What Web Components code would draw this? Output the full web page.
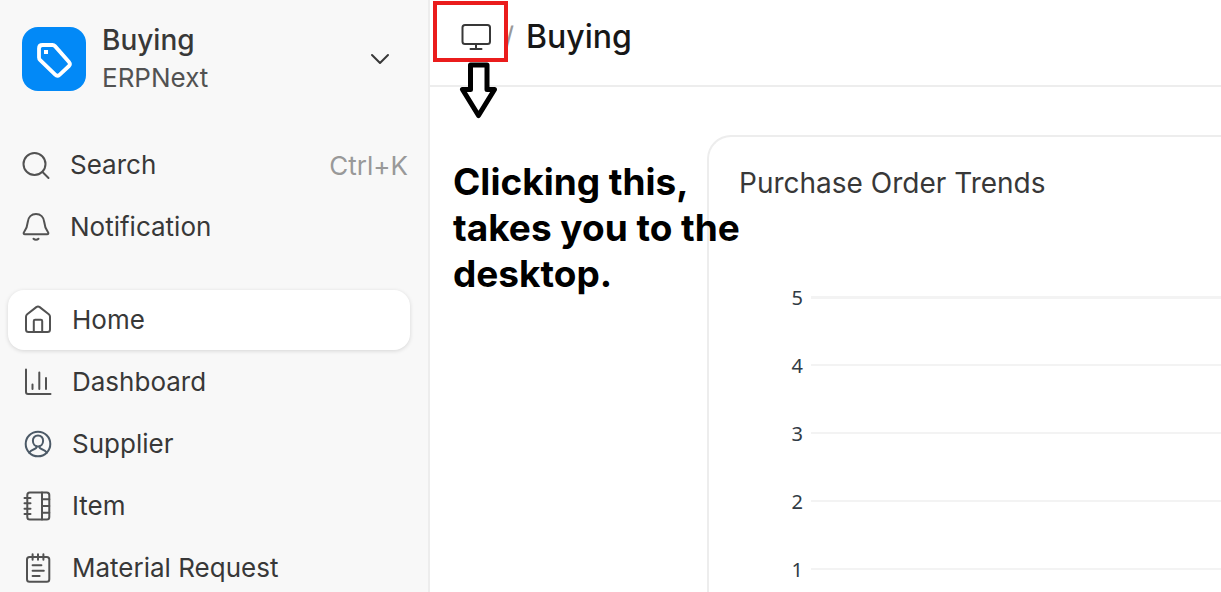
<!DOCTYPE html>
<html lang="en">
<head>
<meta charset="utf-8">
<title>Buying</title>
<style>
	body {
		background: #fff;
		color: #383838;
		font-family: Inter, "Liberation Sans", sans-serif;
		font-size: 26px;
		margin: 0;
	}
</style>
</head>
<body>
<app-shell>
	<app-sidebar slot="sidebar">
		<app-switcher slot="header" name="Buying" suite="ERPNext"></app-switcher>
		<nav-item slot="tools" icon="search" label="Search" shortcut="Ctrl+K"></nav-item>
		<nav-item slot="tools" icon="bell" label="Notification"></nav-item>
		<nav-item icon="home" label="Home" active></nav-item>
		<nav-item icon="chart" label="Dashboard"></nav-item>
		<nav-item icon="supplier" label="Supplier"></nav-item>
		<nav-item icon="item" label="Item"></nav-item>
		<nav-item icon="request" label="Material Request"></nav-item>
	</app-sidebar>
	<page-header>Buying</page-header>
	<chart-card heading="Purchase Order Trends" max="5"></chart-card>
	<help-note slot="note">Clicking this, takes you to the desktop.</help-note>
</app-shell>

<script>
const icons = {
	search: '<circle cx="14.5" cy="15" r="11"/><path d="M22.500 23l6 6"/>',
	bell: '<path d="M16 3c-4.600 0-7.700 3.300-8.200 7.800-.4 4.200-.8 6.200-3.700 10.200-.9 1.300-.5 2.300.9 2.300h22c1.400 0 1.800-1 .9-2.300-2.900-4-3.300-6-3.700-10.200C23.700 6.300 20.600 3 16 3zM13.500 27.800c1.300 1.400 3.700 1.400 5 0"/>',
	home: '<path d="M14.300 3.100 5.200 10.200Q4 11.200 4 12.700V25.500Q4 28 6.500 28h19q2.500 0 2.500-2.500V12.700q0-1.500-1.200-2.500L17.700 3.100q-1.700-1.300-3.400 0zM11.800 28V17q0-1.300 1.300-1.300h5.800q1.300 0 1.300 1.300v11"/>',
	chart: '<path d="M4 3.500V26q0 2 2 2h22.500M10.500 18.500V23M17.300 6.500V23M24 12v11"/>',
	supplier: '<circle cx="16" cy="16" r="12.3"/><path d="M16 7.600c-3.200 0-5.100 2.100-5.100 5.100 0 3.300 2.200 5.700 5.100 5.700s5.100-2.400 5.100-5.700c0-3-1.900-5.100-5.100-5.100zM14.500 18.300c.2 1.500-.5 2.100-2 2.700-2.200.9-4.200 1.800-5.300 3.600M17.500 18.300c-.2 1.500.5 2.100 2 2.700 2.200.9 4.200 1.800 5.300 3.600"/>',
	item: '<rect x="5.300" y="2.600" width="22" height="27" rx="2.500"/><path d="M20 2.600v27M20 9.300h7.300M20 16h7.300M20 22.700h7.300M2.500 8h6M2.500 13.300h6M2.500 18.700h6M2.500 24h6"/>',
	request: '<rect x="5" y="5" width="22.300" height="24.800" rx="2.500"/><path d="M10.600 2.300v5.500M16 2.300v5.500M21.400 2.300v5.500M10.600 13.300h8.800M10.600 18.700h11.200M10.600 24h7"/>',
	monitor: '<rect x="2.500" y="4" width="27.500" height="19" rx="2.500"/><path d="M16 23v5M10.500 28h11"/>',
	chevron: '<path d="M8 12l8 8 8-8"/>'
};

const icon = (name) => `
	<svg class="icon" width="32" height="32" viewBox="0 0 32 32" fill="none" stroke="currentColor"
		stroke-width="2" stroke-linecap="round" stroke-linejoin="round" aria-hidden="true">${icons[name]}</svg>`;

class AppShell extends HTMLElement {
	constructor() {
		super();
		this.attachShadow({ mode: 'open' }).innerHTML = `
			<style>
			:host {
				display: grid;
				grid-template-columns: 430px minmax(0, 1fr);
				height: 100vh;
				overflow: hidden;
			}
			main {
				overflow: hidden;
				position: relative;
			}
			</style>
			<slot name="sidebar"></slot>
			<main>
				<slot></slot>
				<slot name="note"></slot>
			</main>
		`;
	}
}
window.customElements.define('app-shell', AppShell);

class AppSidebar extends HTMLElement {
	constructor() {
		super();
		this.attachShadow({ mode: 'open' }).innerHTML = `
			<style>
			:host {
				background: #f8f8f8;
				border-right: 2px solid #ededed;
				box-sizing: border-box;
				display: block;
				overflow: hidden;
				padding: 27px 18px 0 8px;
			}
			.tools,
			nav {
				display: grid;
				gap: 2px;
			}
			.tools {
				--row-padding: 12px;
				margin: 44px 0 33px;
			}
			</style>
			<slot name="header"></slot>
			<div class="tools"><slot name="tools"></slot></div>
			<nav><slot></slot></nav>
		`;
	}
}
window.customElements.define('app-sidebar', AppSidebar);

class AppSwitcher extends HTMLElement {
	connectedCallback() {
		this.attachShadow({ mode: 'open' }).innerHTML = `
			<style>
			:host {
				display: block;
			}
			button {
				align-items: center;
				background: none;
				border: 0;
				color: inherit;
				cursor: pointer;
				display: flex;
				font: inherit;
				gap: 16px;
				height: 64px;
				padding: 0 14px;
				text-align: left;
				width: 100%;
			}
			.logo {
				background: #0289f7;
				border-radius: 16px;
				flex: none;
			}
			.text {
				flex: 1;
				line-height: 37px;
			}
			.name,
			.suite {
				display: block;
			}
			.name {
				font-size: 28px;
				font-weight: 500;
			}
			.suite {
				color: #525252;
			}
			</style>
			<button type="button">
				<svg class="logo" width="64" height="64" viewBox="0 0 64 64" fill="none" aria-hidden="true">
					<path d="M20.500 18H30.500Q32 18 33 19.100L47 34.900Q48.800 37 47 39L37.500 47.800Q35.300 49.800 33.200 47.700L18.200 33.200Q17 32 17 30.500V21.500Q17 18 20.500 18Z" stroke="#fff" stroke-width="3.800" stroke-linejoin="round"/>
					<rect x="22" y="23" width="4" height="4" fill="#fff"/>
				</svg>
				<span class="text">
					<span class="name">${this.getAttribute('name')}</span>
					<span class="suite">${this.getAttribute('suite')}</span>
				</span>
				${icon('chevron')}
			</button>
		`;
	}
}
window.customElements.define('app-switcher', AppSwitcher);

class NavItem extends HTMLElement {
	connectedCallback() {
		const shortcut = this.getAttribute('shortcut');

		this.attachShadow({ mode: 'open' }).innerHTML = `
			<style>
			:host {
				display: block;
			}
			a {
				align-items: center;
				border-radius: 16px;
				box-sizing: border-box;
				color: inherit;
				display: flex;
				gap: 18px;
				height: 60px;
				padding: 0 var(--row-padding, 14px);
				text-decoration: none;
			}
			:host([active]) a {
				background: #fff;
				box-shadow: 0 1px 4px rgba(0, 0, 0, .14);
			}
			.icon {
				color: #525252;
				flex: none;
			}
			:host([icon="supplier"]) .icon {
				color: #4c5a67;
			}
			.label {
				flex: 1;
				padding-bottom: 2px;
			}
			kbd {
				color: #999;
				font: inherit;
				margin-right: -10px;
			}
			</style>
			<a href="#">
				${icon(this.getAttribute('icon'))}
				<span class="label">${this.getAttribute('label')}</span>
				${shortcut ? `<kbd>${shortcut}</kbd>` : ''}
			</a>
		`;
	}
}
window.customElements.define('nav-item', NavItem);

class PageHeader extends HTMLElement {
	constructor() {
		super();
		this.attachShadow({ mode: 'open' }).innerHTML = `
			<style>
			:host {
				align-items: center;
				border-bottom: 2px solid #ededed;
				box-sizing: border-box;
				color: #171717;
				display: flex;
				font-size: 32px;
				height: 87px;
				padding: 0 30px 12px;
			}
			a {
				color: #383838;
				display: flex;
			}
			.divider {
				color: #999;
				font-size: 28px;
				margin: 0 12px;
			}
			h1 {
				font-size: inherit;
				font-weight: 500;
				margin: 0;
			}
			</style>
			<a href="#" aria-label="Desktop">${icon('monitor')}</a>
			<span class="divider">/</span>
			<h1><slot></slot></h1>
		`;
	}
}
window.customElements.define('page-header', PageHeader);

class ChartCard extends HTMLElement {
	connectedCallback() {
		const max = parseInt(this.getAttribute('max'), 10);
		let rows = '';
		for (let i = max; i > 0; i--) {
			rows += `<div class="tick"><span>${i}</span><i></i></div>`;
		}

		this.attachShadow({ mode: 'open' }).innerHTML = `
			<style>
			:host {
				border: 2px solid #ededed;
				border-right: 0;
				border-radius: 24px 0 0 0;
				display: block;
				margin: 48px 0 0 277px;
				padding: 24px 0 0 30px;
			}
			h2 {
				font-size: 28px;
				font-weight: 400;
				line-height: 44px;
				margin: 0;
			}
			.plot {
				margin-top: 58px;
				padding-left: 43px;
			}
			.tick {
				align-items: center;
				color: #313b44;
				display: grid;
				font-family: "Noto Sans", sans-serif;
				font-size: 20px;
				gap: 8px;
				grid-template-columns: 21px minmax(0, 1fr);
				height: 68px;
				text-align: right;
			}
			.tick i {
				background: #f3f3f3;
				height: 2px;
			}
			.tick:first-child i {
				height: 3px;
			}
			</style>
			<h2>${this.getAttribute('heading')}</h2>
			<div class="plot">${rows}</div>
		`;
	}
}
window.customElements.define('chart-card', ChartCard);

// red frame, arrow and caption laid over the page
class HelpNote extends HTMLElement {
	constructor() {
		super();
		this.attachShadow({ mode: 'open' }).innerHTML = `
			<style>
			:host {
				color: #000;
				left: 3px;
				pointer-events: none;
				position: absolute;
				top: 1px;
				width: 320px;
			}
			.frame {
				border: 4px solid #ea1c1c;
				box-sizing: border-box;
				height: 61px;
				width: 75px;
			}
			svg {
				display: block;
				margin-left: 26px;
			}
			p {
				font-size: 37px;
				font-weight: 700;
				line-height: 46px;
				margin: 40px 0 0 20px;
			}
			</style>
			<div class="frame"></div>
			<svg width="40" height="57" viewBox="0 0 40 57" aria-hidden="true">
				<path d="M11.500 3H28v24.500h7.500L19.500 53.500 3.500 27.500h8z" fill="#fff" stroke="#000" stroke-width="5" stroke-linejoin="round"/>
			</svg>
			<p><slot></slot></p>
		`;
	}
}
window.customElements.define('help-note', HelpNote);
</script>
</body>
</html>
